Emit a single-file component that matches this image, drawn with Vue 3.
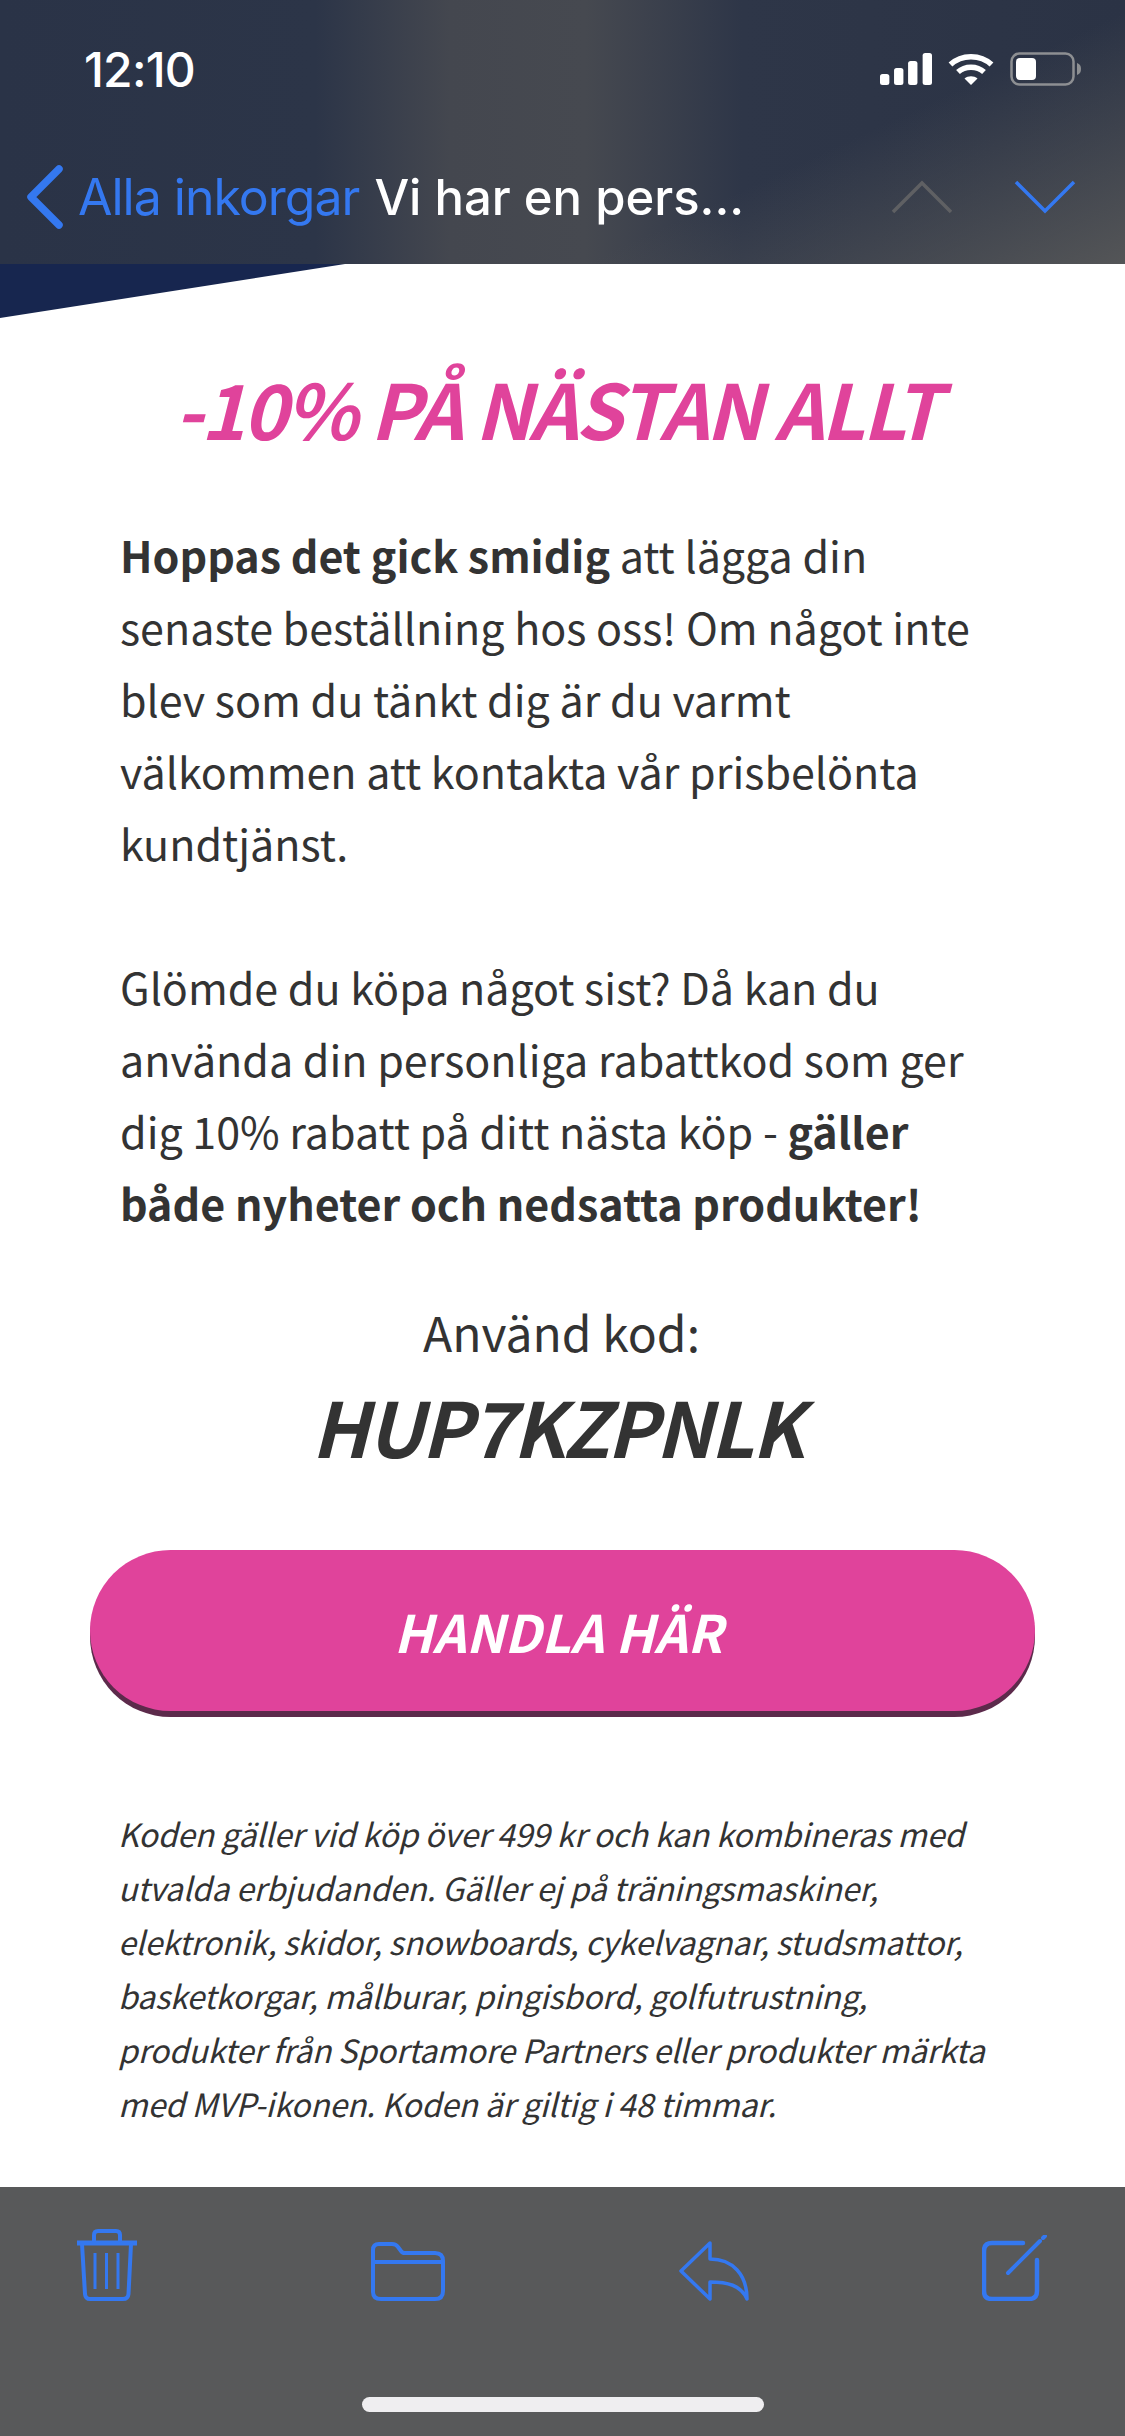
<template>
  <div class="screen">
    <header class="top">
      <div class="status">
        <span class="time">12:10</span>
        <div class="status-icons">
          <svg width="52" height="32" viewBox="0 0 50 32" preserveAspectRatio="none" fill="#fff">
            <rect x="0" y="21" width="9" height="11" rx="2.5" />
            <rect x="13.5" y="15" width="9" height="17" rx="2.5" />
            <rect x="27" y="8" width="9" height="24" rx="2.5" />
            <rect x="41" y="0" width="9" height="32" rx="2.5" />
          </svg>
          <svg width="46" height="33" viewBox="0 0 46 33" fill="none" stroke="#fff" stroke-width="5.5">
            <path d="M2.5 11.5C13.5 1 32.5 1 43.5 11.5" />
            <path d="M10 19C17 12.5 29 12.5 36 19" />
            <path d="M23 32L16.5 25.5C20 22.500 26 22.500 29.500 25.5Z" fill="#fff" stroke="none" />
          </svg>
          <svg width="72" height="34" viewBox="0 0 72 34" fill="none">
            <rect x="1.500" y="1.500" width="62" height="31" rx="8" stroke="#8d8f92" stroke-width="2.500" />
            <rect x="6" y="6" width="20" height="22" rx="4" fill="#fff" />
            <path d="M67 11C70 12 71 14 71 17C71 20 70 22 67 23Z" fill="#8d8f92" />
          </svg>
        </div>
      </div>
      <nav class="nav">
        <svg class="back" width="38" height="64" viewBox="0 0 38 64" fill="none" stroke="#3478f0" stroke-width="7.500" stroke-linecap="round" stroke-linejoin="round">
          <path d="M33 4L5 32L33 60" />
        </svg>
        <span class="inbox">Alla inkorgar</span>
        <span class="subject">Vi har en pers...</span>
        <div class="arrows">
          <svg width="62" height="34" viewBox="0 0 62 34" fill="none" stroke="#5f6063" stroke-width="3.500">
            <path d="M2 32L31 3L60 32" />
          </svg>
          <svg width="62" height="34" viewBox="0 0 62 34" fill="none" stroke="#3478f0" stroke-width="3.500">
            <path d="M2 2L31 31L60 2" />
          </svg>
        </div>
      </nav>
    </header>

    <main class="mail">
      <div class="wedge"></div>
      <h1 class="headline">-10% PÅ NÄSTAN ALLT</h1>
      <p class="copy"><b>Hoppas det gick smidig</b> att lägga din<br />senaste beställning hos oss! Om något inte<br />blev som du tänkt dig är du varmt<br />välkommen att kontakta vår prisbelönta<br />kundtjänst.</p>
      <p class="copy second">Glömde du köpa något sist? Då kan du<br />använda din personliga rabattkod som ger<br />dig 10% rabatt på ditt nästa köp - <b>gäller</b><br /><b>både nyheter och nedsatta produkter!</b></p>
      <p class="use">Använd kod:</p>
      <p class="code">HUP7KZPNLK</p>
      <a class="cta">HANDLA HÄR</a>
      <p class="terms">Koden gäller vid köp över 499 kr och kan kombineras med<br />utvalda erbjudanden. Gäller ej på träningsmaskiner,<br />elektronik, skidor, snowboards, cykelvagnar, studsmattor,<br />basketkorgar, målburar, pingisbord, golfutrustning,<br />produkter från Sportamore Partners eller produkter märkta<br />med MVP-ikonen. Koden är giltig i 48 timmar.</p>
    </main>

    <footer class="toolbar">
      <div class="tools">
        <svg width="62" height="72" viewBox="0 0 62 72" fill="none" stroke="#3478f0" stroke-width="3.500" stroke-linejoin="round">
          <path d="M18 13V6Q18 2 22 2H40Q44 2 44 6V13" stroke-width="4" />
          <path d="M1 14H61" stroke-width="5" />
          <path d="M6 15L9 65Q9.500 70 14 70H47Q52 70 52.500 65L55 15" stroke-width="4" />
          <path d="M19 24V60M30.500 24V60M42 24V60" stroke-width="3" />
        </svg>
        <svg width="74" height="59" viewBox="0 0 74 59" fill="none" stroke="#3478f0" stroke-width="4" stroke-linejoin="round">
          <path d="M2 50V8Q2 2 8 2H21Q25 2 27 5L30 9Q31 11 34 11H64Q72 11 72 19V49Q72 57 64 57H10Q2 57 2 50Z" />
          <path d="M2 20H72" />
        </svg>
        <svg width="70" height="60" viewBox="0 0 70 60" fill="none" stroke="#3478f0" stroke-width="3.500" stroke-linejoin="round">
          <path d="M31 2L2 30L31 58V41C48 41 62 44 68 58C68 34 54 18 31 18Z" />
        </svg>
        <svg width="65" height="66" viewBox="0 0 65 66" fill="none" stroke="#3478f0" stroke-width="4.500" stroke-linecap="round">
          <path d="M41 8H10Q2 8 2 16V56Q2 64 10 64H47Q55 64 55 56V25" />
          <path d="M26 38L58 6" stroke-width="4" />
          <path d="M61 3L63 1" stroke-width="4" />
        </svg>
      </div>
      <div class="home"></div>
    </footer>
  </div>
</template>

<script setup>
</script>

<style>
html, body {
  margin: 0;
  background: #fff;
}
</style>

<style scoped>
.screen {
  width: 1125px;
  height: 2436px;
  display: flex;
  flex-direction: column;
  overflow: hidden;
  font-family: "Noto Sans CJK SC", "Noto Sans", sans-serif;
  color: #333;
}
.top {
  height: 264px;
  flex: none;
  color: #fff;
  font-family: "Inter", "Liberation Sans", sans-serif;
  background:
    linear-gradient(155deg, rgba(70, 72, 78, 0) 68%, rgba(86, 87, 88, 0.95) 100%),
    linear-gradient(90deg, #2a3347 0, #2c3548 28%, #44474f 40%, #464950 52%, #2e3648 66%, #2b3345 100%);
}
.status {
  display: flex;
  justify-content: space-between;
  align-items: center;
  padding: 47px 43px 0 84px;
  height: 44px;
}
.time {
  font-size: 48px;
  font-weight: 500;
  letter-spacing: -0.8px;
}
.status-icons {
  display: flex;
  align-items: center;
  gap: 16px;
}
.nav {
  display: flex;
  align-items: center;
  height: 64px;
  margin-top: 74px;
  padding: 0 49px 0 26px;
  font-size: 50px;
}
.inbox {
  color: #3478f0;
  margin-left: 14px;
  letter-spacing: -1px;
}
.subject {
  margin-left: 15px;
  font-size: 49px;
  font-weight: 500;
}
.arrows {
  margin-left: auto;
  display: flex;
  gap: 61px;
}
.mail {
  flex: 1;
  position: relative;
  background: #fff;
  box-sizing: border-box;
  padding: 94px 121px 0;
}
.wedge {
  position: absolute;
  left: 0;
  top: 0;
  width: 345px;
  height: 54px;
  background: #17264f;
  clip-path: polygon(0 0, 100% 0, 0 100%);
}
.headline {
  margin: 0 -60px;
  padding-right: 12px;
  text-align: center;
  color: #e0439b;
  font-size: 76px;
  letter-spacing: -2.6px;
  line-height: 98px;
  font-weight: 700;
  font-style: italic;
}
.copy {
  margin: 0 0 0 -1px;
  margin-top: 62px;
  font-size: 43px;
  line-height: 72px;
  white-space: nowrap;
}
.copy b {
  font-weight: 700;
}
.copy.second {
  margin-top: 72px;
}
.use {
  margin: 61px 0 0;
  padding-right: 2px;
  text-align: center;
  font-size: 48px;
  line-height: 64px;
}
.code {
  margin: 14px 0 0;
  padding-right: 12px;
  text-align: center;
  font-size: 76px;
  letter-spacing: -2.2px;
  line-height: 96px;
  font-weight: 700;
  font-style: italic;
}
.cta {
  display: block;
  margin: 77px -31px 0;
  padding-right: 9px;
  height: 161px;
  border-radius: 81px;
  background: #e0439b;
  box-shadow: 0 6px 0 #5c2a4b;
  color: #fff;
  text-align: center;
  font-size: 51.5px;
  line-height: 161px;
  font-weight: 700;
  font-style: italic;
}
.terms {
  margin: 95px -40px 0 -3px;
  font-size: 32px;
  letter-spacing: -0.2px;
  line-height: 54px;
  font-style: italic;
  white-space: nowrap;
}
.toolbar {
  height: 249px;
  flex: none;
  background: #58595a;
  position: relative;
}
.tools {
  display: flex;
  justify-content: space-between;
  align-items: flex-end;
  height: 72px;
  padding: 42px 78px 0 76px;
}
.home {
  position: absolute;
  left: 362px;
  top: 210px;
  width: 402px;
  height: 15px;
  border-radius: 8px;
  background: #efeef0;
}
</style>
